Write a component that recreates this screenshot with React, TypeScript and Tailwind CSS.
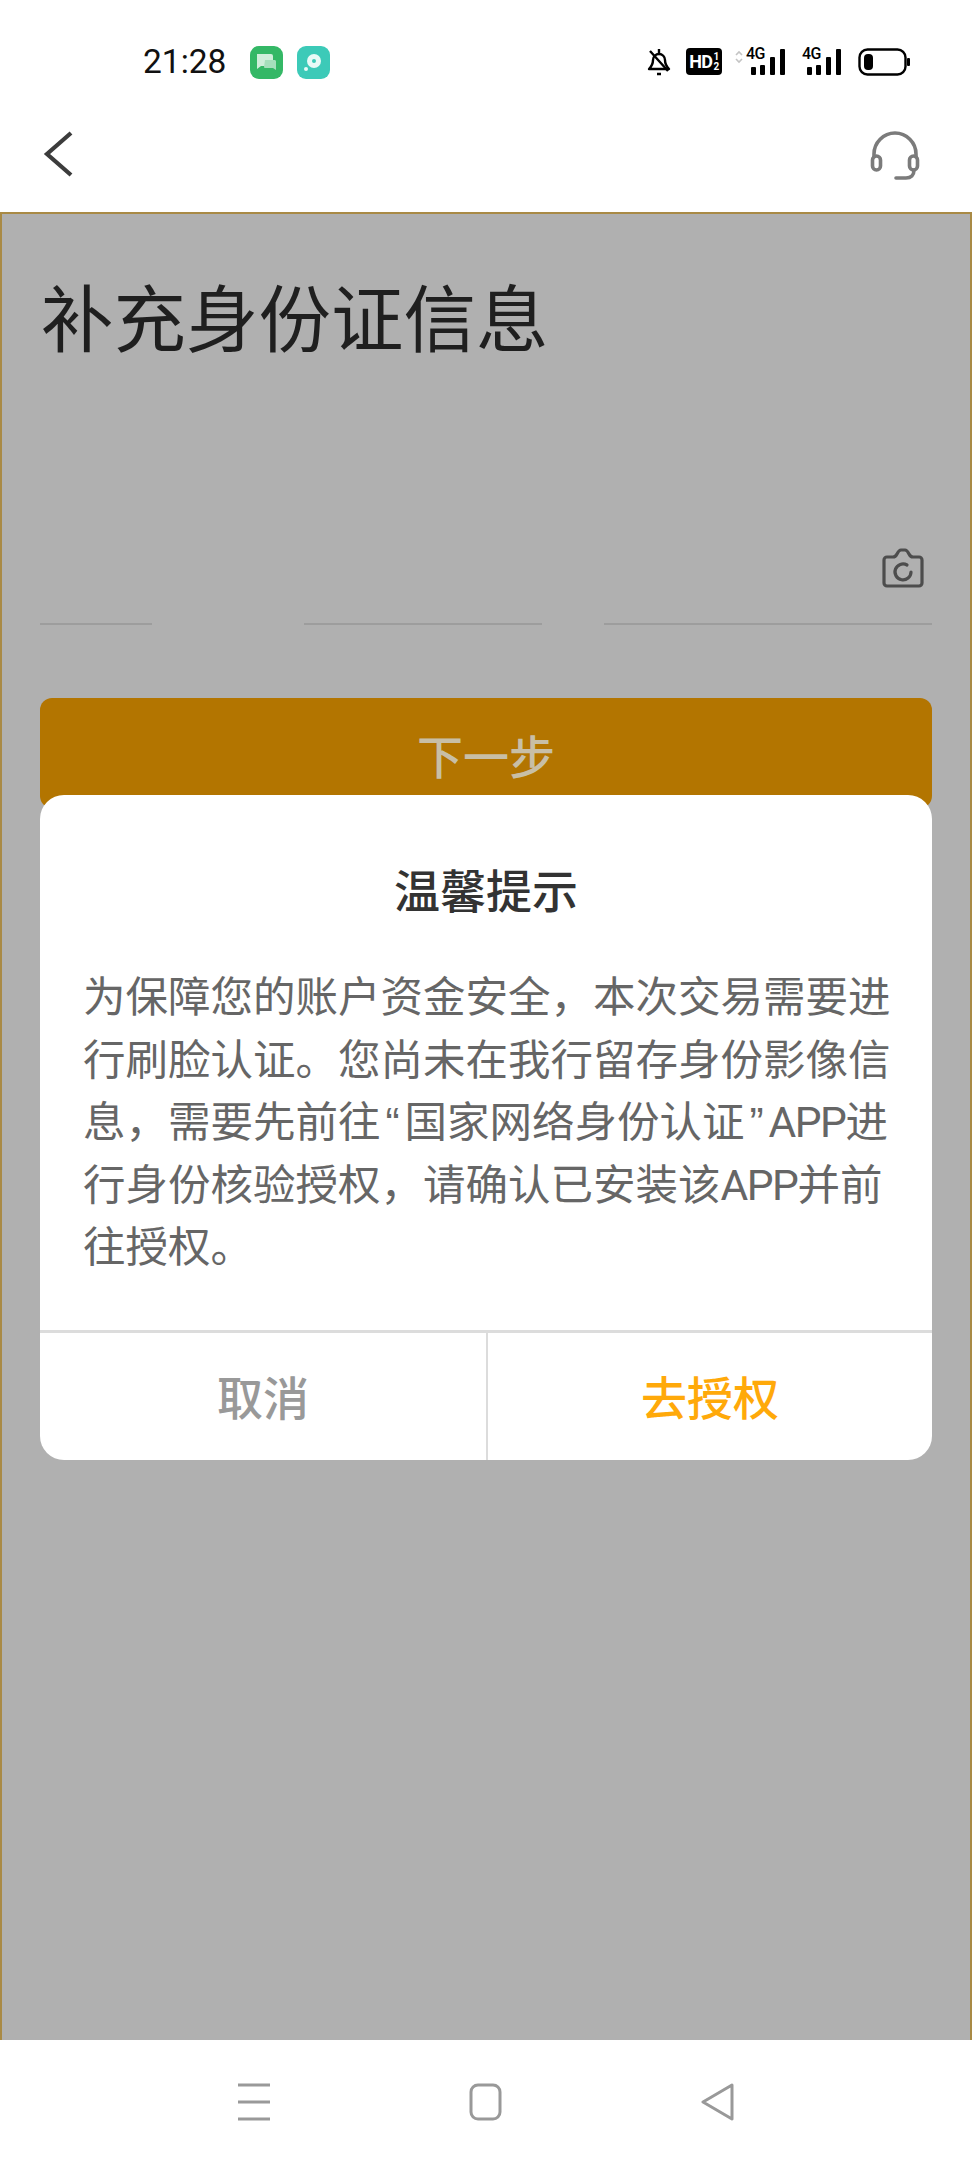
const cjk = "font-['Noto_Sans_CJK_SC','Noto_Sans',sans-serif]";

// 4G label plus four signal bars; the first SIM also shows the data arrows
const Signal = ({ arrows }: { arrows?: boolean }) => {
  const offset = arrows ? 11 : 0;
  return (
    <div className="relative h-[28px] shrink-0" style={{ width: 40 + offset }}>
      <svg width={40 + offset} height="28" viewBox={`0 0 ${40 + offset} 28`} fill="#000">
        {arrows && <path d="M1 7l3-3 3 3M1 11l3 3 3-3" fill="none" stroke="#c4c4c4" strokeWidth="1.6" />}
        <g transform={`translate(${offset} 0)`}>
          <rect x="5" y="19" width="5" height="8" rx="1" />
          <rect x="14" y="17" width="5" height="10" rx="1" />
          <rect x="24" y="9" width="5" height="18" rx="1" />
          <rect x="34" y="1" width="5" height="26" rx="1" />
        </g>
      </svg>
      <span
        className="absolute top-[-2px] font-['Roboto',sans-serif] text-[16px] font-medium leading-[16px] tracking-[-0.5px] text-black"
        style={{ left: offset }}
      >
        4G
      </span>
    </div>
  );
};

const StatusBar = () => (
  <div className="flex h-[98px] items-start pt-[44px] pl-[143px] pr-[62px]">
    <span className="w-[84px] font-['Roboto',sans-serif] text-[33.5px] leading-[36px] text-[#111]">21:28</span>
    <svg width="33" height="33" viewBox="0 0 33 33" className="ml-[23px] mt-[2px]">
      <rect width="33" height="33" rx="9" fill="#34b866" />
      <path d="M7 8h14a2 2 0 0 1 2 2v8a2 2 0 0 1-2 2H11l-4 3z" fill="#cfeeda" />
      <path d="M15 14h10a2 2 0 0 1 1 1v9l-3-2h-8a1 1 0 0 1-1-1z" fill="#a5dfbb" />
    </svg>
    <svg width="33" height="33" viewBox="0 0 33 33" className="ml-[14px] mt-[2px]">
      <rect width="33" height="33" rx="9" fill="#3ccab8" />
      <circle cx="17" cy="15" r="7" fill="#e8faf7" />
      <circle cx="17" cy="15" r="2" fill="#3ccab8" />
      <circle cx="9" cy="23" r="2" fill="#e8faf7" />
    </svg>
    <div className="ml-auto mt-[4px] flex items-start">
      <svg width="24" height="28" viewBox="0 0 24 28" fill="none" stroke="#000" strokeWidth="2.4">
        <path d="M2 21c2-2 4-4 4-9a6 6 0 0 1 12 0c0 5 2 7 4 9z" strokeLinejoin="round" />
        <path d="M12 1v4M10 26h4M3 3l18 20" />
      </svg>
      <div className="ml-[15px] flex h-[27px] w-[36px] items-center justify-center rounded-[4px] bg-black font-['Roboto',sans-serif] text-[18px] font-bold leading-none tracking-[-0.5px] text-white">
        HD
        <span className="ml-[1px] flex flex-col items-center text-[10px] leading-[10px]">
          <span>1</span>
          <span>2</span>
        </span>
      </div>
      <div className="ml-[13px]">
        <Signal arrows />
      </div>
      <div className="ml-[16px]">
        <Signal />
      </div>
      <svg width="52" height="28" viewBox="0 0 52 28" className="ml-[16px]">
        <rect x="1.5" y="1.5" width="46" height="25" rx="8" fill="none" stroke="#000" strokeWidth="2.4" />
        <rect x="6" y="6" width="9" height="16" rx="4" fill="#000" />
        <rect x="49" y="10" width="3" height="8" rx="1" fill="#000" />
      </svg>
    </div>
  </div>
);

const NavBar = () => (
  <div className="flex h-[114px] items-start justify-between pl-[43px] pr-[52px] pt-[33px]">
    <svg width="30" height="46" viewBox="0 0 30 46" fill="none" stroke="#3c3c3c" strokeWidth="4.2">
      <path d="M28 2 L4 23 L28 44" />
    </svg>
    <svg width="50" height="50" viewBox="0 0 50 50" fill="none" stroke="#7b7b7b" strokeWidth="3.6" strokeLinecap="round">
      <path d="M4 26V23a21 21 0 0 1 42 0v3" />
      <rect x="2.5" y="25" width="8" height="14" rx="4" />
      <rect x="39.5" y="25" width="8" height="14" rx="4" />
      <path d="M44 39c0 5-3 8-8 8h-10" />
    </svg>
  </div>
);

const Quote = ({ children }: { children: string }) => (
  <span className="inline-block w-[24px] text-center font-['Liberation_Sans',sans-serif] leading-none">{children}</span>
);

const AppName = () => <span className="font-['Roboto',sans-serif] leading-none tracking-[-1.5px]">APP</span>;

const ConfirmDialog = () => (
  <div className={`absolute left-[38px] top-[581px] w-[892px] overflow-hidden rounded-[24px] bg-white ${cjk}`}>
    <h2 className="pt-[68px] text-center text-[46px] font-medium leading-[50px] text-[#333]">温馨提示</h2>
    <p className="mt-[50px] h-[367px] whitespace-nowrap pl-[43px] text-[42.5px] leading-[62.6px] text-[#666]">
      <span className="block">为保障您的账户资金安全，本次交易需要进</span>
      <span className="block">行刷脸认证。您尚未在我行留存身份影像信</span>
      <span className="block">
        息，需要先前往<Quote>“</Quote>国家网络身份认证<Quote>”</Quote><AppName />进
      </span>
      <span className="block">
        行身份核验授权，请确认已安装该<AppName />并前
      </span>
      <span className="block">往授权。</span>
    </p>
    <div className="flex h-[130px] border-t-[3px] border-[#dcdcdc]">
      <div className="flex w-[448px] shrink-0 items-center justify-center border-r-2 border-[#dcdcdc] pb-[2px] text-[46px] font-medium text-[#999]">取消</div>
      <div className="flex flex-1 items-center justify-center pb-[2px] text-[46px] font-medium text-[#ffa90a]">去授权</div>
    </div>
  </div>
);

const FormArea = () => (
  <main className={`relative flex-1 border-x-2 border-t-2 border-[#a98a45] bg-[#b0b0b0] ${cjk}`}>
    <h1 className="pl-[39px] pt-[59px] pb-[2px] text-[72.5px] leading-[84px] text-[#1f1f1f]">补充身份证信息</h1>
    <div className="absolute right-[46px] top-[334px]">
      <svg width="42" height="40" viewBox="0 0 42 40" fill="none" stroke="#4d4d4d" strokeWidth="3.2" strokeLinecap="round">
        <path d="M5 9h6c2 0 3-1 4-3 1-2 2-4 4-4h4c2 0 3 2 4 4 1 2 2 3 4 3h6a3 3 0 0 1 3 3v23a3 3 0 0 1-3 3H5a3 3 0 0 1-3-3V12a3 3 0 0 1 3-3z" />
        <path d="M25 17a8 8 0 1 0 4 7" />
      </svg>
    </div>
    <div className="mt-[264px] flex pl-[38px] pr-[38px]">
      <div className="h-[2px] w-[112px] bg-[#9d9d9d]" />
      <div className="ml-[152px] h-[2px] w-[238px] bg-[#9d9d9d]" />
      <div className="ml-[62px] h-[2px] flex-1 bg-[#9d9d9d]" />
    </div>
    <div className="mx-[38px] mt-[73px] flex h-[110px] justify-center rounded-[12px] bg-[#b37500] pt-[26px] text-[46px] font-medium leading-[60px] text-[#c8bfa6]">
      下一步
    </div>
    <ConfirmDialog />
  </main>
);

const BottomBar = () => (
  <div className="flex h-[120px] items-start bg-white pt-[43px] pl-[237px]">
    <svg width="34" height="38" viewBox="0 0 34 38" stroke="#999" strokeWidth="3">
      <path d="M1 2h32M1 19h32M1 36h32" />
    </svg>
    <svg width="34" height="38" viewBox="0 0 34 38" fill="none" stroke="#999" strokeWidth="3" className="ml-[198px]">
      <rect x="2" y="2" width="29" height="34" rx="7" />
    </svg>
    <svg width="34" height="38" viewBox="0 0 34 38" fill="none" stroke="#999" strokeWidth="3" strokeLinejoin="round" className="ml-[198px]">
      <path d="M31 2 L2 19 L31 36 Z" />
    </svg>
  </div>
);

export default function App() {
  return (
    <div className="flex h-[2160px] w-[972px] flex-col overflow-hidden bg-white">
      <StatusBar />
      <NavBar />
      <FormArea />
      <BottomBar />
    </div>
  );
}
